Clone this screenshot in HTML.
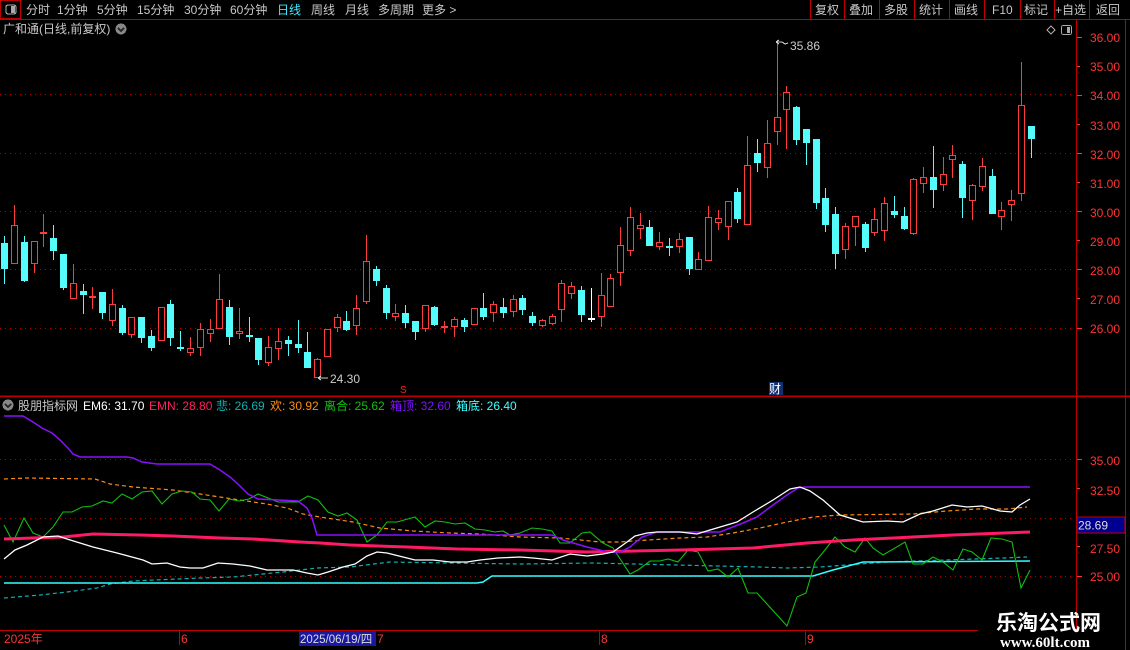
<!DOCTYPE html>
<html><head><meta charset="utf-8">
<style>
html,body{margin:0;padding:0;background:#000;width:1130px;height:650px;overflow:hidden}
svg{display:block}
text{font-family:"Liberation Sans","Noto Sans CJK SC",sans-serif;font-size:12px}
</style></head><body>
<svg id="s" width="1130" height="650" xmlns="http://www.w3.org/2000/svg" shape-rendering="crispEdges">
<rect width="1130" height="650" fill="#000"/>
<rect x="0.5" y="0.5" width="20" height="18" fill="none" stroke="#c00000"/>
<rect x="6" y="5" width="10" height="9" rx="2" fill="none" stroke="#aaa" stroke-width="1.2"/>
<rect x="11" y="6" width="4" height="7" fill="#aaa"/>
<g fill="#c8c8c8">
<text x="26" y="14">分时</text><text x="57" y="14">1分钟</text><text x="97" y="14">5分钟</text><text x="137" y="14">15分钟</text><text x="184" y="14">30分钟</text><text x="230" y="14">60分钟</text>
<text x="277" y="14" fill="#40e8ff">日线</text><text x="311" y="14">周线</text><text x="345" y="14">月线</text><text x="378" y="14">多周期</text><text x="422" y="14">更多 &gt;</text>
<text x="815" y="14">复权</text><text x="849" y="14">叠加</text><text x="884" y="14">多股</text><text x="919" y="14">统计</text><text x="954" y="14">画线</text><text x="992" y="14">F10</text><text x="1024" y="14">标记</text><text x="1055" y="14">+自选</text><text x="1096" y="14">返回</text>
</g>
<g stroke="#c00000"><line x1="0" y1="19.5" x2="1130" y2="19.5"/>
<line x1="810.5" y1="0" x2="810.5" y2="19"/><line x1="844.5" y1="0" x2="844.5" y2="19"/><line x1="879.5" y1="0" x2="879.5" y2="19"/><line x1="914.5" y1="0" x2="914.5" y2="19"/><line x1="949.5" y1="0" x2="949.5" y2="19"/><line x1="984.5" y1="0" x2="984.5" y2="19"/><line x1="1020.5" y1="0" x2="1020.5" y2="19"/><line x1="1054.5" y1="0" x2="1054.5" y2="19"/><line x1="1089.5" y1="0" x2="1089.5" y2="19"/>
</g>
<text x="3" y="33" fill="#c8c8c8">广和通(日线,前复权)</text>
<circle cx="121" cy="29" r="5.5" fill="#888"/><path d="M118 28l3 3 3-3" stroke="#222" stroke-width="1.5" fill="none"/>
<path d="M1047 30l4-4 4 4-4 4z" fill="none" stroke="#aaa"/>
<rect x="1061.5" y="25.5" width="10" height="9" rx="2" fill="none" stroke="#aaa"/><rect x="1067" y="27" width="3" height="6" fill="#aaa"/>
<g stroke="#c00000">
<line x1="1076.5" y1="20" x2="1076.5" y2="630"/>
<line x1="1125.5" y1="20" x2="1125.5" y2="650"/>
<line x1="0" y1="396" x2="1130" y2="396" stroke-width="1.5"/>
<line x1="0" y1="630.5" x2="978" y2="630.5"/>
</g>
<g stroke="#b00000" stroke-dasharray="1 4">
<line x1="0" y1="94.5" x2="1075" y2="94.5"/><line x1="0" y1="153.5" x2="1075" y2="153.5"/><line x1="0" y1="211.5" x2="1075" y2="211.5"/><line x1="0" y1="269.5" x2="1075" y2="269.5"/><line x1="0" y1="328.5" x2="1075" y2="328.5"/>
<line x1="0" y1="459.5" x2="1075" y2="459.5"/><line x1="0" y1="518.5" x2="1075" y2="518.5"/><line x1="0" y1="576.5" x2="1075" y2="576.5"/>
</g>
<g fill="#ff3434" text-anchor="end">
<text x="1120" y="42">36.00</text><text x="1120" y="71">35.00</text><text x="1120" y="100">34.00</text><text x="1120" y="130">33.00</text><text x="1120" y="159">32.00</text><text x="1120" y="188">31.00</text><text x="1120" y="217">30.00</text><text x="1120" y="246">29.00</text><text x="1120" y="275">28.00</text><text x="1120" y="304">27.00</text><text x="1120" y="333">26.00</text>
<text x="1120" y="465">35.00</text><text x="1120" y="495">32.50</text><text x="1120" y="553">27.50</text><text x="1120" y="581">25.00</text>
</g>
<g stroke="#ff3434">
<line x1="1077" y1="37.5" x2="1082" y2="37.5"/><line x1="1077" y1="66.5" x2="1080" y2="66.5"/><line x1="1077" y1="95.5" x2="1082" y2="95.5"/><line x1="1077" y1="124.5" x2="1080" y2="124.5"/><line x1="1077" y1="153.5" x2="1082" y2="153.5"/><line x1="1077" y1="182.5" x2="1080" y2="182.5"/><line x1="1077" y1="211.5" x2="1082" y2="211.5"/><line x1="1077" y1="240.5" x2="1080" y2="240.5"/><line x1="1077" y1="269.5" x2="1082" y2="269.5"/><line x1="1077" y1="298.5" x2="1080" y2="298.5"/><line x1="1077" y1="328.5" x2="1082" y2="328.5"/>
<line x1="1077" y1="459.5" x2="1082" y2="459.5"/><line x1="1077" y1="488.5" x2="1080" y2="488.5"/><line x1="1077" y1="546.5" x2="1080" y2="546.5"/><line x1="1077" y1="576.5" x2="1082" y2="576.5"/>
</g>
<rect x="1077" y="517" width="48" height="16" fill="#000090" stroke="#c00000"/>
<text x="1078" y="529.5" fill="#ddd">28.69</text>
<circle cx="8" cy="405" r="5.5" fill="#888"/><path d="M5 404l3 3 3-3" stroke="#222" stroke-width="1.5" fill="none"/>
<text x="18" y="410" fill="#c8c8c8">股朋指标网</text>
<text x="83" y="410" fill="#fff">EM6: 31.70</text>
<text x="149" y="410" fill="#ff2060">EMN: 28.80</text>
<text x="216" y="410" fill="#10b0b0">悲: 26.69</text>
<text x="270" y="410" fill="#ff8c10">欢: 30.92</text>
<text x="324" y="410" fill="#10c010">离合: 25.62</text>
<text x="390" y="410" fill="#8010ff">箱顶: 32.60</text>
<text x="456" y="410" fill="#40ffff">箱底: 26.40</text>
<g id="cd"></g>
<g id="ln" fill="none" shape-rendering="auto"></g>
<path d="M776 42 l3 -2 M776 42 l3 2 M776 42 h6 l3 2 l3-1" stroke="#ccc" fill="none"/>
<text x="790" y="50" fill="#ccc">35.86</text>
<path d="M318 378 h10 M318 378 l3 -2 M318 378 l3 2" stroke="#ccc" fill="none"/>
<text x="330" y="383" fill="#ccc">24.30</text>
<text x="400" y="393" fill="#ff2020" style="font-size:10px">S</text>
<rect x="769" y="382" width="14" height="13" fill="#103070"/>
<text x="769" y="393" fill="#fff">财</text>
<g stroke="#c00000"><line x1="179.5" y1="631" x2="179.5" y2="645"/><line x1="599.5" y1="631" x2="599.5" y2="645"/><line x1="805.5" y1="631" x2="805.5" y2="645"/></g>
<g fill="#ff3434"><text x="4" y="643">2025年</text><text x="181" y="643">6</text><text x="377" y="643">7</text><text x="601" y="643">8</text><text x="807" y="643">9</text></g>
<rect x="299" y="631" width="77" height="15" fill="#1818a0"/>
<text x="300" y="643" fill="#ddd" style="font-size:11.5px">2025/06/19/四</text>
<text x="996" y="630" fill="#fff" style="font-size:21px;font-weight:bold;font-family:'Noto Sans CJK SC',sans-serif">乐淘公式网</text>
<text x="1000" y="647" fill="#fff" style="font-size:15px;font-weight:bold;font-family:'Liberation Serif',serif">www.60lt.com</text>
</svg>
<script>
var D=[
['c',243,268,236,283],['r',225,263,205,263],['c',242,280,236,281],['r',241,263,241,272],['r',232,232,214,246],['c',238,250,225,259],['c',254,287,254,289],['r',283,298,264,298],['c',291,294,284,313],['r',296,296,287,308],
['c',292,312,292,318],['r',304,320,289,325],['c',308,332,305,334],['r',317,334,317,337],['c',317,337,317,342],['c',336,347,330,350],['r',307,340,307,340],['c',304,337,300,345],['c',347,347,331,350],['r',348,352,337,355],
['r',329,347,323,355],['r',329,333,319,341],['r',299,328,274,328],['c',307,336,300,344],['r',331,333,308,338],['c',335,335,317,341],['c',338,359,338,364],['r',347,362,336,365],['r',341,348,328,359],['c',340,343,336,355],
['c',344,347,320,352],['c',352,367,332,367],['r',359,377,358,377],['r',329,356,329,356],['r',317,327,314,331],['c',321,329,311,330],['r',308,325,295,334],['r',261,301,235,303],['c',269,280,266,285],['c',288,312,285,318],
['r',313,316,304,320],['c',313,322,305,327],['c',321,331,321,339],['r',305,328,305,331],['c',307,324,306,325],['r',326,326,321,332],['r',319,326,317,336],['c',320,326,318,331],['r',308,324,308,324],['c',308,316,293,319],
['r',304,312,301,321],['c',307,312,298,317],['r',299,311,295,316],['c',298,309,295,314],['c',316,322,312,325],['r',320,325,319,326],['r',316,323,314,324],['r',283,309,280,321],['r',286,293,282,298],['c',290,314,286,321],
['w',318,318,288,321],['r',295,316,273,326],['r',278,306,274,306],['r',245,272,227,285],['r',217,250,207,255],['r',225,228,213,238],['c',227,245,220,245],['r',242,246,232,249],['c',246,246,238,255],['r',239,246,233,252],
['c',237,268,237,274],['r',259,269,252,269],['r',217,260,206,260],['r',218,222,210,229],['r',201,226,201,239],['c',192,218,188,222],['r',165,224,136,224],['c',153,162,139,171],['r',143,167,120,177],['r',117,131,40,144],
['r',92,109,86,148],['c',107,139,106,144],['c',129,142,129,164],['c',139,202,139,208],['c',198,224,188,231],['c',214,253,207,268],['r',226,249,223,258],['r',216,226,216,245],['c',224,247,222,251],['r',219,232,208,235],
['r',203,230,197,240],['c',211,214,196,217],['c',216,228,207,229],['r',179,233,178,234],['r',177,183,167,192],['c',177,189,146,207],['r',174,184,157,190],['r',155,159,145,177],['c',164,197,161,217],['r',185,200,184,219],
['r',166,186,158,190],['c',176,213,169,213],['r',210,216,202,229],['r',200,204,190,220],['r',105,193,62,200],['c',126,138,126,157]];
var h='';
D.forEach(function(d,i){var x=Math.round(4.3+i*9.775),t=d[1],b=d[2],hi=d[3],lo=d[4];
var col=d[0]=='r'?'#ff3c3c':(d[0]=='c'?'#54fcfc':'#ffffff');
h+='<line x1="'+(x+.5)+'" y1="'+hi+'" x2="'+(x+.5)+'" y2="'+(lo+1)+'" stroke="'+col+'"/>';
if(b-t<2){h+='<rect x="'+(x-3)+'" y="'+t+'" width="7" height="2" fill="'+col+'"/>';}
else if(d[0]=='r'){h+='<rect x="'+(x-2.5)+'" y="'+(t+.5)+'" width="6" height="'+(b-t)+'" fill="#000" stroke="'+col+'"/>';}
else{h+='<rect x="'+(x-3)+'" y="'+t+'" width="7" height="'+(b-t+1)+'" fill="'+col+'"/>';}
});
document.getElementById('cd').innerHTML=h;
function P(a,c,w,dash){return '<polyline points="'+a+'" stroke="'+c+'" stroke-width="'+w+'"'+(dash?' stroke-dasharray="'+dash+'"':'')+'/>';}
var L='';
L+=P('4,598 40,595 67,592 97,588 110,584 133,581 200,578 233,577 283,572 317,568 350,567 390,562 450,563 520,564 593,563 760,567 787,568 820,567 887,562 1003,558 1027,557','#10b0b0',1.2,'4 3');
L+=P('4,583 477,583 483,582 492,576 813,576 833,570 863,562 1030,561','#30ffff',1.5);
L+=P('4,479 27,478 95,479 110,484 133,487 173,490 200,494 233,499 267,504 287,508 303,514 320,517 353,522 380,528 413,531 450,533 480,534 520,537 560,538 600,542 620,542 633,541 680,538 707,537 733,533 760,528 787,522 813,517 840,515 913,514 947,511 977,509 1007,509 1027,507','#ff8c10',1.2,'4 3');
L+=P('4,525 13,542 24,518 33,533 43,537 53,527 63,512 72,512 82,507 92,506 103,501 112,503 122,494 132,499 142,492 152,491 162,504 172,494 182,491 192,492 200,499 210,500 219,511 229,499 239,501 249,499 258,494 268,498 278,502 298,502 308,496 318,500 328,512 338,516 347,513 357,520 367,542 377,535 387,522 397,522 415,517 425,527 435,521 445,522 455,524 465,523 475,529 485,530 495,532 503,531 510,535 520,533 532,528 542,529 552,531 560,543 570,543 582,533 590,532 603,543 613,548 630,574 638,570 650,561 660,561 668,559 678,562 688,550 698,552 708,571 718,569 728,577 738,568 748,593 757,593 787,626 797,597 806,593 815,562 825,550 835,537 845,547 855,552 865,538 873,548 883,555 905,542 913,564 923,564 933,557 943,562 953,570 963,549 972,552 982,560 991,538 1002,539 1012,542 1021,588 1030,570','#10c010',1.1);
L+=P('4,539 63,537 93,534 140,535 173,536 220,538 253,539 300,542 320,543 350,545 407,547 457,549 520,550 587,552 680,550 753,548 807,543 853,540 913,537 953,535 1030,532','#ff1a66',3);
L+=P('4,416 23,416 33,422 42,428 52,433 60,440 67,447 73,454 80,457 127,457 133,458 142,462 157,464 210,464 220,470 230,477 240,486 248,494 258,499 298,501 307,508 312,518 317,535 552,535 563,540 587,547 608,552 620,552 630,547 642,537 657,532 720,532 743,523 757,517 773,505 787,495 798,488 805,487 1030,487','#8a10ff',1.5);
L+=P('4,559 15,550 27,545 43,537 58,536 67,539 93,547 117,553 143,560 152,564 167,563 180,567 190,568 203,568 218,563 233,564 250,566 267,570 293,570 307,573 318,575 328,572 343,567 355,564 367,556 377,552 387,553 403,557 415,560 433,560 450,562 467,562 480,560 498,558 520,557 533,558 552,560 570,554 587,556 603,554 613,552 627,542 635,536 647,533 657,532 680,532 697,534 710,530 737,522 753,512 773,500 790,489 800,487 810,491 823,500 840,515 863,522 887,521 903,522 920,514 933,511 952,505 967,507 982,506 1000,511 1012,512 1020,505 1030,499','#ffffff',1.3);
document.getElementById('ln').innerHTML=L;
</script>
</body></html>
